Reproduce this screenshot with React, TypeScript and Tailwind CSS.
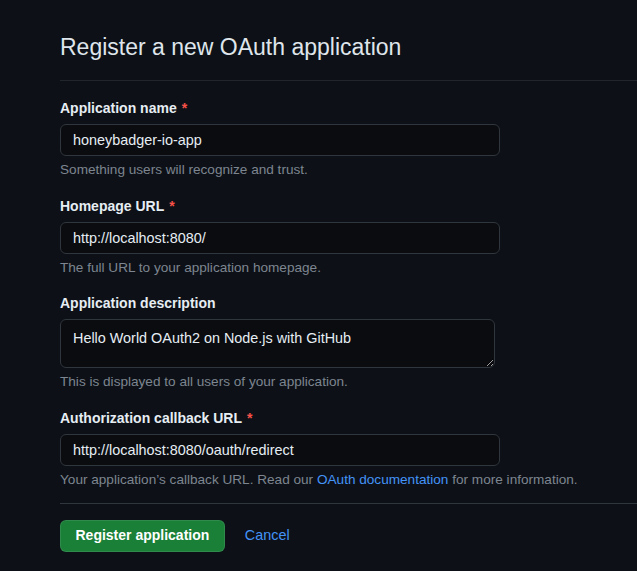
// Register OAuth application form

import { useState } from 'react';

function Field({
  id,
  label,
  required,
  note,
  last,
  children,
}: {
  id: string;
  label: string;
  required?: boolean;
  note: React.ReactNode;
  last?: boolean;
  children: React.ReactNode;
}) {
  return (
    <div className={last ? 'mb-[14.5px]' : 'mb-[16.5px]'}>
      <label htmlFor={id} className="mb-[5px] block text-[14px] leading-[21px] font-semibold text-[#e6edf3]">
        {label}
        {required && <span className="ml-[5px] text-[#f85149]">*</span>}
      </label>
      {children}
      <p className="mt-[5px] text-[13.6px] leading-[18px] text-[#7d8590]">{note}</p>
    </div>
  );
}

export default function App() {
  const [name, setName] = useState('honeybadger-io-app');
  const [homepage, setHomepage] = useState('http://localhost:8080/');
  const [description, setDescription] = useState('Hello World OAuth2 on Node.js with GitHub');
  const [callback, setCallback] = useState('http://localhost:8080/oauth/redirect');

  const inputClass =
    'block h-[32px] w-[440px] rounded-[6px] border border-[#30363d] bg-[#0a0c10] px-[12px] text-[14.4px] text-[#e6edf3] outline-none';

  return (
    <div
      className="min-h-[571px] bg-[#0d1117] pl-[60px] pt-[32px]"
      style={{ fontFamily: '"Liberation Sans", Arial, sans-serif' }}
    >
      <h1 className="pb-[18px] text-[23px] leading-[30px] font-normal text-[#dfe5eb]">
        Register a new OAuth application
      </h1>
      <div className="mb-[17px] border-t border-[#21262d]" />

      <form>
        <Field id="name" label="Application name" required note="Something users will recognize and trust.">
          <input id="name" className={inputClass} value={name} onChange={(e) => setName(e.target.value)} />
        </Field>

        <Field id="homepage" label="Homepage URL" required note="The full URL to your application homepage.">
          <input
            id="homepage"
            className={inputClass}
            value={homepage}
            onChange={(e) => setHomepage(e.target.value)}
          />
        </Field>

        <Field id="description" label="Application description" note="This is displayed to all users of your application.">
          <textarea
            id="description"
            className="block h-[49px] w-[435px] rounded-[6px] border border-[#30363d] bg-[#0a0c10] px-[12px] py-[8px] text-[14.4px] leading-[20px] text-[#e6edf3] outline-none"
            value={description}
            onChange={(e) => setDescription(e.target.value)}
          />
        </Field>

        <Field
          id="callback"
          label="Authorization callback URL"
          required
          last
          note={
            <>
              Your application’s callback URL. Read our{' '}
              <a href="#" className="text-[#4493f8]">
                OAuth documentation
              </a>{' '}
              for more information.
            </>
          }
        >
          <input
            id="callback"
            className={inputClass}
            value={callback}
            onChange={(e) => setCallback(e.target.value)}
          />
        </Field>

        <div className="border-t border-[#30363d] pt-[15.5px]">
          <div className="flex items-center gap-[20px]">
            <button
              type="button"
              className="h-[32px] rounded-[6px] border border-[#f0f6fc1a] bg-[#1a7f37] px-[14.5px] text-[14px] font-semibold text-white"
            >
              Register application
            </button>
            <a href="#" className="text-[14.4px] text-[#4493f8]">
              Cancel
            </a>
          </div>
        </div>
      </form>
    </div>
  );
}
